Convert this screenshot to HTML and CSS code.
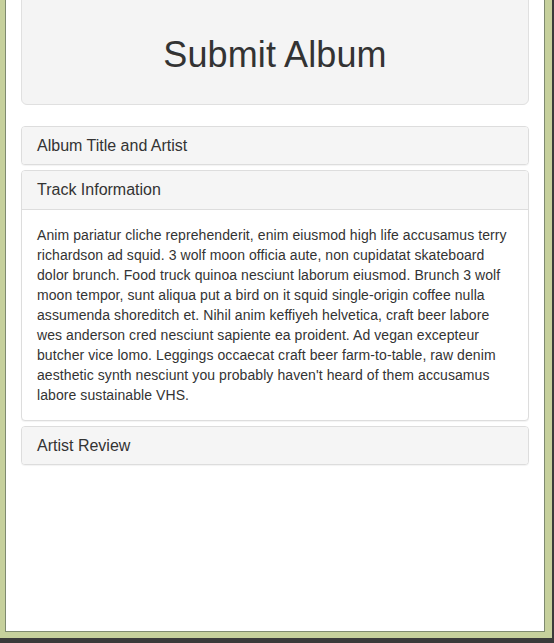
FILE: index.html
```html
<!DOCTYPE html>
<html lang="en">
<head>
<meta charset="utf-8">
<title>Submit Album</title>
<link rel="stylesheet" href="styles.css">
</head>
<body>
<div class="frame">
  <div class="window">
    <div class="jumbotron">
      <h1 class="title">Submit Album</h1>
    </div>
    <div class="panel-group">
      <div class="panel">
        <div class="panel-heading"><h4 class="panel-title">Album Title and Artist</h4></div>
      </div>
      <div class="panel">
        <div class="panel-heading"><h4 class="panel-title">Track Information</h4></div>
        <div class="panel-body">Anim pariatur cliche reprehenderit, enim eiusmod high life accusamus terry<br>richardson ad squid. 3 wolf moon officia aute, non cupidatat skateboard<br>dolor brunch. Food truck quinoa nesciunt laborum eiusmod. Brunch 3 wolf<br>moon tempor, sunt aliqua put a bird on it squid single-origin coffee nulla<br>assumenda shoreditch et. Nihil anim keffiyeh helvetica, craft beer labore<br>wes anderson cred nesciunt sapiente ea proident. Ad vegan excepteur<br>butcher vice lomo. Leggings occaecat craft beer farm-to-table, raw denim<br>aesthetic synth nesciunt you probably haven't heard of them accusamus<br>labore sustainable VHS.</div>
      </div>
      <div class="panel">
        <div class="panel-heading"><h4 class="panel-title">Artist Review</h4></div>
      </div>
    </div>
  </div>
</div>
</body>
</html>
```
FILE: styles.css
```css
html, body {
  margin: 0;
  padding: 0;
  height: 100%;
}
body {
  background: #3a3a3a;
  font-family: "Liberation Sans", Arial, sans-serif;
  font-size: 14px;
  line-height: 20px;
  color: #333;
  overflow: hidden;
}
.frame {
  width: 552px;
  height: 638px;
  box-sizing: border-box;
  background: #c6d09c;
  padding: 0 7px 6px 5px;
}
.window {
  height: 100%;
  box-sizing: border-box;
  background: #fff;
  border: 1px solid #7f8a70;
  border-top: none;
  padding: 0 15px;
  overflow: hidden;
}
.jumbotron {
  margin-top: -20px;
  padding: 54px 0 29px;
  background: #f4f4f4;
  border: 1px solid #e0e0e0;
  border-radius: 6px;
  text-align: center;
}
.title {
  margin: 0;
  font-size: 36px;
  font-weight: 500;
  line-height: 1.1;
  color: #333;
  letter-spacing: 0.1px;
}
.panel-group {
  margin-top: 21px;
  display: flex;
  flex-direction: column;
  gap: 5px;
}
.panel {
  background: #fff;
  border: 1px solid #ddd;
  border-radius: 4px;
  box-shadow: 0 1px 1px rgba(0, 0, 0, 0.05);
  overflow: hidden;
}
.panel-heading {
  background: #f5f5f5;
  padding: 10px 15px;
  color: #333;
}
.panel-heading + .panel-body {
  border-top: 1px solid #ddd;
}
.panel-title {
  margin: 0;
  font-size: 16px;
  font-weight: 500;
  line-height: 1.1;
}
.panel-body {
  padding: 15px;
  white-space: nowrap;
  letter-spacing: 0.08px;
}
```
